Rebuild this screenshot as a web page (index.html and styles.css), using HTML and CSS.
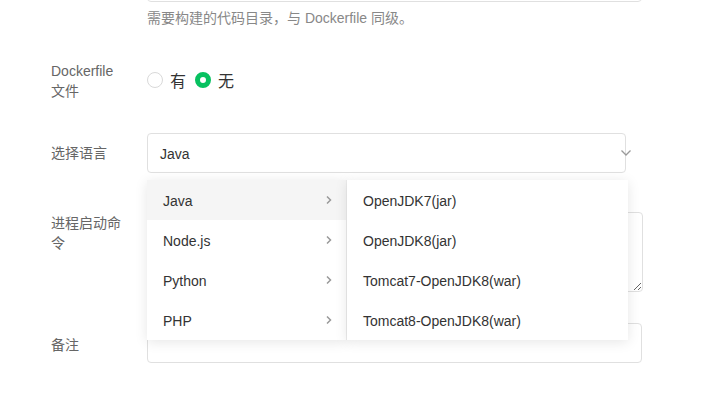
FILE: index.html
```html
<!DOCTYPE html>
<html lang="zh">
<head>
<meta charset="utf-8">
<link rel="stylesheet" href="styles.css">
</head>
<body>
<form class="form">
  <div class="row row-dir">
    <div class="label"></div>
    <div class="content">
      <input class="input" type="text">
      <div class="help">需要构建的代码目录，与 Dockerfile 同级。</div>
    </div>
  </div>

  <div class="row row-docker">
    <div class="label">Dockerfile 文件</div>
    <div class="content radios">
      <label class="radio"><span class="dot"></span><span>有</span></label>
      <label class="radio checked"><span class="dot"></span><span>无</span></label>
    </div>
  </div>

  <div class="row row-lang">
    <div class="label label-mid">选择语言</div>
    <div class="content">
      <div class="select">
        <span class="select-text">Java</span>
        <svg class="select-arrow" width="12" height="8" viewBox="0 0 12 8"><path d="M1.5 1.5 L6 6 L10.5 1.5" fill="none" stroke="#999" stroke-width="1.3"/></svg>
      </div>
      <div class="cascader">
        <ul class="menu menu-left">
          <li class="item active"><span class="item-text">Java</span><svg class="chev" width="8" height="10" viewBox="0 0 8 10"><path d="M2 1.5 L5.5 5 L2 8.5" fill="none" stroke="#999" stroke-width="1.5"/></svg></li>
          <li class="item"><span class="item-text">Node.js</span><svg class="chev" width="8" height="10" viewBox="0 0 8 10"><path d="M2 1.5 L5.5 5 L2 8.5" fill="none" stroke="#999" stroke-width="1.5"/></svg></li>
          <li class="item"><span class="item-text">Python</span><svg class="chev" width="8" height="10" viewBox="0 0 8 10"><path d="M2 1.5 L5.5 5 L2 8.5" fill="none" stroke="#999" stroke-width="1.5"/></svg></li>
          <li class="item"><span class="item-text">PHP</span><svg class="chev" width="8" height="10" viewBox="0 0 8 10"><path d="M2 1.5 L5.5 5 L2 8.5" fill="none" stroke="#999" stroke-width="1.5"/></svg></li>
        </ul>
        <ul class="menu menu-right">
          <li class="item"><span class="item-text">OpenJDK7(jar)</span></li>
          <li class="item"><span class="item-text">OpenJDK8(jar)</span></li>
          <li class="item"><span class="item-text">Tomcat7-OpenJDK8(war)</span></li>
          <li class="item"><span class="item-text">Tomcat8-OpenJDK8(war)</span></li>
        </ul>
      </div>
    </div>
  </div>

  <div class="row row-cmd">
    <div class="label">进程启动命令</div>
    <div class="content">
      <textarea class="textarea"></textarea>
    </div>
  </div>

  <div class="row row-note">
    <div class="label label-low">备注</div>
    <div class="content">
      <input class="input" type="text">
    </div>
  </div>
</form>
</body>
</html>
```

FILE: styles.css
```css
* { box-sizing: border-box; }
html, body {
  margin: 0;
  padding: 0;
  background: #fff;
  overflow: hidden;
}
body {
  font-family: "Liberation Sans", "Noto Sans CJK SC", sans-serif;
  font-size: 14px;
  color: #333;
  width: 728px;
  height: 393px;
}
.form {
  padding-left: 51px;
}
.row {
  display: grid;
  grid-template-columns: 72px 495px;
  column-gap: 24px;
  align-items: start;
}
.label {
  color: #666;
  font-size: 14px;
  line-height: 20px;
  padding-top: 1px;
}
.label.label-mid {
  padding-top: 10px;
}
.label.label-low {
  padding-top: 12px;
}
.content {
  position: relative;
}
.input {
  display: block;
  width: 495px;
  height: 40px;
  border: 1px solid #e0e0e0;
  border-radius: 4px;
  outline: none;
  font: inherit;
  padding: 0 12px;
}
.row-dir {
  margin-top: -38px;
}
.help {
  margin-top: 6px;
  font-size: 14px;
  line-height: 20px;
  color: #888;
}
.row-docker {
  margin-top: 32px;
}
.radios {
  display: flex;
  align-items: center;
  height: 40px;
  gap: 9px;
}
.radio {
  display: flex;
  align-items: center;
  gap: 7px;
  font-size: 16px;
  color: #333;
}
.dot {
  width: 16px;
  height: 16px;
  border-radius: 50%;
  border: 1.5px solid #d9d9d9;
  background: #fff;
}
.radio.checked .dot {
  border: 5px solid #07c160;
  background: #fff;
}
.row-lang {
  margin-top: 32px;
}
.select {
  display: flex;
  align-items: center;
  justify-content: space-between;
  width: 479px;
  height: 40px;
  border: 1px solid #e0e0e0;
  border-radius: 4px;
  padding-left: 12px;
}
.select-text {
  padding-top: 1px;
}
.select-arrow {
  margin-right: -7px;
}
.cascader {
  position: absolute;
  top: 47px;
  left: 0;
  display: flex;
  z-index: 10;
  background: #fff;
}
.menu {
  list-style: none;
  margin: 0;
  padding: 0;
  background: #fff;
  box-shadow: 0 2px 12px rgba(0, 0, 0, 0.1);
}
.menu-left {
  width: 200px;
  border-right: 1px solid #ececec;
}
.menu-right {
  width: 281px;
}
.item {
  display: flex;
  align-items: center;
  justify-content: space-between;
  height: 40px;
  padding: 0 16px;
  color: #333;
  white-space: nowrap;
}
.item-text {
  padding-top: 2px;
}
.item.active {
  background: #f5f5f5;
}
.chev {
  margin-right: -3px;
}
.row-cmd {
  margin-top: 39px;
}
.textarea {
  display: block;
  width: 496px;
  height: 80px;
  border: 1px solid #e0e0e0;
  border-radius: 4px;
  resize: vertical;
  font: inherit;
  outline: none;
}
.row-note {
  margin-top: 31px;
}
```
